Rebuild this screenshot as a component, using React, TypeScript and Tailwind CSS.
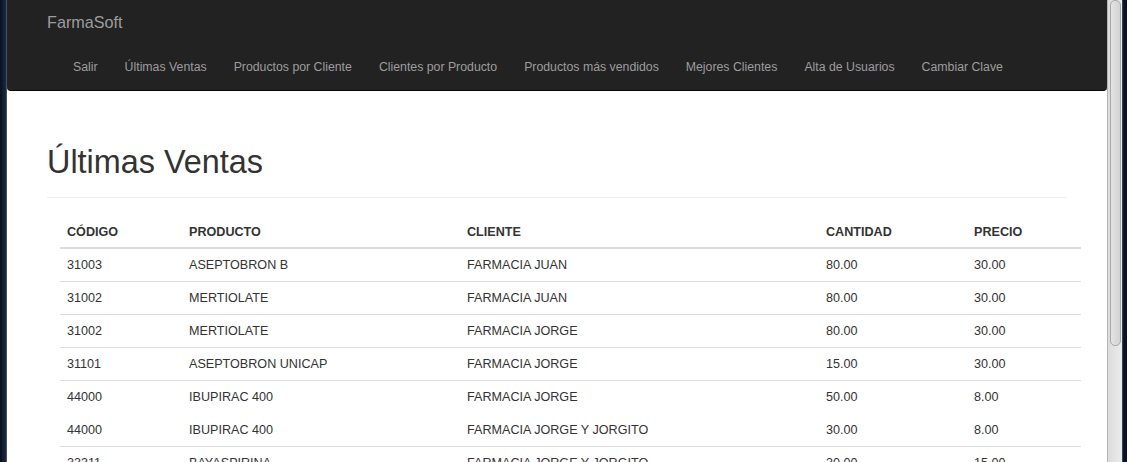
import React from 'react';

const links = [
  'Salir',
  'Últimas Ventas',
  'Productos por Cliente',
  'Clientes por Producto',
  'Productos más vendidos',
  'Mejores Clientes',
  'Alta de Usuarios',
  'Cambiar Clave',
];

const ventas = [
  ['31003', 'ASEPTOBRON B', 'FARMACIA JUAN', '80.00', '30.00'],
  ['31002', 'MERTIOLATE', 'FARMACIA JUAN', '80.00', '30.00'],
  ['31002', 'MERTIOLATE', 'FARMACIA JORGE', '80.00', '30.00'],
  ['31101', 'ASEPTOBRON UNICAP', 'FARMACIA JORGE', '15.00', '30.00'],
  ['44000', 'IBUPIRAC 400', 'FARMACIA JORGE', '50.00', '8.00'],
  ['44000', 'IBUPIRAC 400', 'FARMACIA JORGE Y JORGITO', '30.00', '8.00'],
  ['33311', 'BAYASPIRINA', 'FARMACIA JORGE Y JORGITO', '30.00', '15.00'],
];

const cols = ['w-[122px]', 'w-[278px]', 'w-[359px]', 'w-[148px]', 'w-[114px]'];
const heads = ['CÓDIGO', 'PRODUCTO', 'CLIENTE', 'CANTIDAD', 'PRECIO'];

export default function App() {
  return (
    <div className="flex h-[462px] w-[1127px] overflow-hidden bg-[#0b1526] font-['Liberation_Sans',Arial,sans-serif]">
      <div className="w-[6px] shrink-0 bg-gradient-to-r from-[#06101f] to-[#1b2a44]" />
      <div className="w-px shrink-0 bg-[#4a4f58]" />

      <main className="flex w-[1100px] shrink-0 flex-col bg-white">
        <nav className="h-[91px] shrink-0 rounded-b-[4px] border-b border-[#080808] bg-[#222222]">
          <div className="flex h-[45px] items-center pl-[40px]">
            <span className="text-[16.2px] text-[#9d9d9d]">FarmaSoft</span>
          </div>
          <ul className="-mt-[1px] flex h-[45px] items-center pl-[52.5px]">
            {links.map((l) => (
              <li key={l} className="px-[13.5px] text-[12.3px] leading-[18px] text-[#9d9d9d]">{l}</li>
            ))}
          </ul>
        </nav>

        <div className="pl-[40px] pr-[33px] pt-[53px]">
          <div className="w-[1020px] border-b border-[#eeeeee] pb-[8px]">
            <h1 className="mb-[9px] text-[32.4px] leading-[36px] font-normal text-[#333333]">Últimas Ventas</h1>
          </div>
        </div>

        <table className="ml-[53px] mt-[17px] w-[1021px] table-fixed border-collapse text-[12.6px] leading-[18px] text-[#333333]">
          <thead>
            <tr className="border-b-2 border-[#dddddd]">
              {heads.map((h, i) => (
                <th key={h} className={`${cols[i]} px-[7px] pt-[8px] pb-[6px] text-left font-bold`}>{h}</th>
              ))}
            </tr>
          </thead>
          <tbody>
            {ventas.map((r, i) => (
              <tr key={i} className={i === 0 ? '' : i === 5 ? 'border-t border-transparent' : 'border-t border-[#dddddd]'}>
                {r.map((c, j) => (
                  <td key={j} className="px-[7px] py-[7px]">{c}</td>
                ))}
              </tr>
            ))}
          </tbody>
        </table>
      </main>

      <div className="relative w-[15px] shrink-0 border-l border-[#b5b5b5] bg-gradient-to-r from-[#dcdcdc] to-[#ececec]">
        <div className="absolute left-[2px] right-[1px] top-0 h-[346px] rounded-[5px] border border-[#a8a8a8] bg-gradient-to-r from-[#e4e4e4] to-[#d2d2d2]" />
      </div>
      <div className="w-px shrink-0 bg-[#3a3f48]" />
      <div className="flex-1 bg-gradient-to-r from-[#0a1a33] to-[#06101f]" />
    </div>
  );
}
